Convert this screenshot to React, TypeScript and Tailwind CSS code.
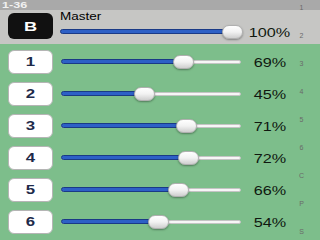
import React from "react";

const rows = [
  { label: "1", pct: 69 },
  { label: "2", pct: 45 },
  { label: "3", pct: 71 },
  { label: "4", pct: 72 },
  { label: "5", pct: 66 },
  { label: "6", pct: 54 },
];

const index = ["1", "2", "3", "4", "5", "6", "C", "P", "S"];

function Slider({ pct }: { pct: number }) {
  const knob = 10 + (pct / 100) * 162;
  return (
    <div className="relative w-[180px] h-[16px]">
      <div className="absolute left-0 right-0 top-[6px] h-[4px] rounded-full bg-[#f6f6f6] border border-[#c4c4c4]" />
      <div
        className="absolute left-0 top-[5px] h-[5px] rounded-full bg-[#2d60c6] border border-[#1a3a86]"
        style={{ width: knob }}
      />
      <div
        className="absolute top-[1px] w-[21px] h-[14px] rounded-full bg-gradient-to-b from-white via-[#f2f2f2] to-[#cfcfcf] border border-[#b0b0b0] shadow-[0_1px_2px_rgba(0,0,0,0.35)]"
        style={{ left: knob - 10 }}
      />
    </div>
  );
}

export default function App() {
  return (
    <div
      className="relative w-[320px] h-[240px] overflow-hidden bg-[#7dbe8b]"
      style={{ fontFamily: '"Liberation Sans", Arial, sans-serif' }}
    >
      <div className="h-[10px] bg-[#a9a9a9] flex items-center pl-[2px]">
        <span className="inline-block origin-left scale-x-[1.4] text-[9px] leading-none font-bold text-[#f0f0f0]">1-36</span>
      </div>
      <div className="h-[34px] bg-[#c6c6c4] flex items-start pl-[8px]">
        <div className="mt-[3px] w-[45px] h-[26px] rounded-[6px] bg-[#111111] flex items-center justify-center">
          <span className="inline-block scale-x-[1.4] text-white font-bold text-[13px] leading-none">B</span>
        </div>
        <div className="ml-[7px] pt-[2px] flex flex-col">
          <span className="inline-block origin-left scale-x-[1.35] text-[10px] leading-[10px] text-black">Master</span>
          <div className="flex items-center -mt-[2px]">
            <Slider pct={100} />
            <span className="w-[58px] text-center">
              <span className="inline-block scale-x-[1.35] text-[12px] leading-none text-[#101810]">100%</span>
            </span>
          </div>
        </div>
      </div>
      <div className="flex flex-col pt-[2px]">
        {rows.map((r) => (
          <div key={r.label} className="h-[32px] flex items-center pl-[8px]">
            <div className="w-[45px] h-[24px] rounded-[6px] bg-white border border-[#b5b5b5] flex items-center justify-center">
              <span className="inline-block scale-x-[1.4] text-[#1e2a4a] font-bold text-[12px] leading-none">{r.label}</span>
            </div>
            <div className="ml-[8px]">
              <Slider pct={r.pct} />
            </div>
            <span className="w-[58px] text-center">
              <span className="inline-block scale-x-[1.35] text-[12px] leading-none text-[#101810]">{r.pct}%</span>
            </span>
          </div>
        ))}
      </div>
      <div className="absolute left-[297px] top-0 w-[9px] h-full">
        {index.map((c, i) => (
          <span
            key={c}
            className="absolute left-0 w-[9px] text-center text-[7px] leading-none text-[#6a6a6a]"
            style={{ top: 4 + i * 28 }}
          >
            {c}
          </span>
        ))}
      </div>
    </div>
  );
}
